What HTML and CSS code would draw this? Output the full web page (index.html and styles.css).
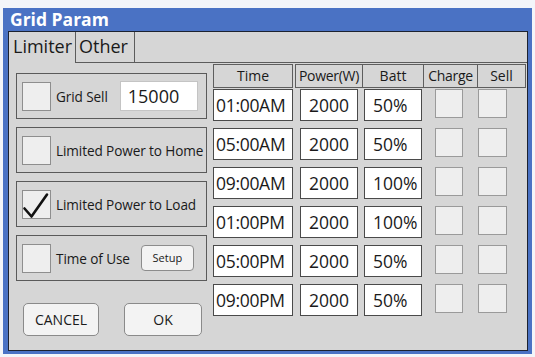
FILE: index.html
```html
<!DOCTYPE html>
<html>
<head>
<meta charset="utf-8">
<link rel="stylesheet" href="styles.css">
</head>
<body>
<div class="window">
  <div class="title">Grid Param</div>
  <div class="panel">
    <div class="tabs">
      <div class="tab active">Limiter</div>
      <div class="tab">Other</div>
      <div class="tab-fill"></div>
    </div>
    <div class="body">
      <div class="left">
        <div class="group">
          <div class="check"></div>
          <span class="label">Grid Sell</span>
          <div class="num-input">15000</div>
        </div>
        <div class="group">
          <div class="check"></div>
          <span class="label">Limited Power to Home</span>
        </div>
        <div class="group">
          <div class="check">
            <svg width="28" height="29" viewBox="0 0 28 29"><path d="M2.5 18.5 L9.5 26.5 L25 4.5" fill="none" stroke="#111" stroke-width="2.6" stroke-linecap="round" stroke-linejoin="round"/></svg>
          </div>
          <span class="label">Limited Power to Load</span>
        </div>
        <div class="group">
          <div class="check"></div>
          <span class="label">Time of Use</span>
          <div class="setup-btn">Setup</div>
        </div>
        <div class="buttons">
          <div class="btn cancel">CANCEL</div>
          <div class="btn ok">OK</div>
        </div>
      </div>
      <div class="right">
        <div class="head">
          <div class="hcell c-time">Time</div>
          <div class="hcell c-power">Power(W)</div>
          <div class="hcell c-batt">Batt</div>
          <div class="hcell c-charge">Charge</div>
          <div class="hcell c-sell">Sell</div>
        </div>
        <div class="row">
          <div class="field f-time">01:00AM</div>
          <div class="field f-power">2000</div>
          <div class="field f-batt">50%</div>
          <div class="cb cb-charge"></div>
          <div class="cb cb-sell"></div>
        </div>
        <div class="row">
          <div class="field f-time">05:00AM</div>
          <div class="field f-power">2000</div>
          <div class="field f-batt">50%</div>
          <div class="cb cb-charge"></div>
          <div class="cb cb-sell"></div>
        </div>
        <div class="row">
          <div class="field f-time">09:00AM</div>
          <div class="field f-power">2000</div>
          <div class="field f-batt">100%</div>
          <div class="cb cb-charge"></div>
          <div class="cb cb-sell"></div>
        </div>
        <div class="row">
          <div class="field f-time">01:00PM</div>
          <div class="field f-power">2000</div>
          <div class="field f-batt">100%</div>
          <div class="cb cb-charge"></div>
          <div class="cb cb-sell"></div>
        </div>
        <div class="row">
          <div class="field f-time">05:00PM</div>
          <div class="field f-power">2000</div>
          <div class="field f-batt">50%</div>
          <div class="cb cb-charge"></div>
          <div class="cb cb-sell"></div>
        </div>
        <div class="row">
          <div class="field f-time">09:00PM</div>
          <div class="field f-power">2000</div>
          <div class="field f-batt">50%</div>
          <div class="cb cb-charge"></div>
          <div class="cb cb-sell"></div>
        </div>
      </div>
    </div>
  </div>
</div>
</body>
</html>
```
FILE: styles.css
```css
* { box-sizing: border-box; }
html, body { margin: 0; padding: 0; }
body {
  width: 535px;
  height: 357px;
  background: #f3f5f9;
  font-family: "Open Sans", "DejaVu Sans", sans-serif;
  color: #1a1a1a;
  overflow: hidden;
}
.window {
  margin: 8px 0 0 3px;
  width: 529px;
  height: 346px;
  background: #4a72c4;
  display: flex;
  flex-direction: column;
}
.title {
  height: 23px;
  padding-left: 7px;
  color: #ffffff;
  font-weight: 700;
  font-size: 17.5px;
  line-height: 23px;
}
.panel {
  flex: 1;
  margin: 0 4px 3px 5px;
  border: 1px solid #1c2230;
  background: #d6d6d6;
  display: flex;
  flex-direction: column;
}
.tabs {
  display: flex;
  height: 31px;
}
.tab {
  font-size: 18px;
  line-height: 29px;
  padding: 0 0 0 4px;
  border-right: 1px solid #5c5c5c;
  border-bottom: 1px solid #5c5c5c;
}
.tab.active {
  width: 67px;
  border-bottom: none;
}
.tab:not(.active) {
  width: 59px;
  padding-left: 3px;
}
.tab-fill {
  flex: 1;
  border-bottom: 1px solid #5c5c5c;
}
.body {
  display: flex;
  padding-left: 7px;
  gap: 6px;
}
.left {
  width: 191px;
  padding-top: 10px;
  display: flex;
  flex-direction: column;
  gap: 8px;
}
.group {
  height: 46px;
  border: 1px solid #5a5a5a;
  display: flex;
  align-items: center;
  padding-left: 5px;
}
.check {
  width: 29px;
  height: 29px;
  background: #eeeeee;
  border: 1px solid #8e8e8e;
  flex: none;
  position: relative;
}
.check svg {
  position: absolute;
  left: -1px;
  top: -1px;
}
.label {
  font-size: 13.6px;
  margin-left: 5px;
  white-space: nowrap;
  letter-spacing: -0.1px;
}
.num-input {
  margin-left: 12px;
  width: 78px;
  height: 30px;
  background: #ffffff;
  border: 1px solid #c4c4c4;
  font-size: 18px;
  line-height: 28px;
  padding-left: 7px;
}
.setup-btn {
  margin-left: 11px;
  width: 53px;
  height: 26px;
  background: #f3f3f3;
  border: 1px solid #8c8c8c;
  border-radius: 4px;
  font-size: 11px;
  line-height: 24px;
  text-align: center;
}
.buttons {
  display: flex;
  margin-top: 14px;
  padding-left: 7px;
  gap: 25px;
}
.btn {
  height: 33px;
  background: #f3f3f3;
  border: 1px solid #8a8a8a;
  border-radius: 5px;
  font-size: 14px;
  line-height: 31px;
  text-align: center;
}
.btn.cancel { width: 76px; }
.btn.ok { width: 78px; }
.right {
  width: 313px;
  padding-top: 1px;
  display: flex;
  flex-direction: column;
  gap: 7px;
}
.head {
  display: flex;
  height: 24px;
  margin-bottom: -6px;
}
.hcell {
  border: 1px solid #5e5e5e;
  border-left: none;
  font-size: 14px;
  line-height: 22px;
  text-align: center;
  white-space: nowrap;
}
.c-time { width: 80px; border-left: 1px solid #5e5e5e; }
.c-power { width: 68px; margin-left: 2px; border-left: 1px solid #5e5e5e; letter-spacing: -0.3px; }
.c-batt { width: 61px; }
.c-charge { width: 54px; letter-spacing: -0.3px; }
.c-sell { width: 48px; }
.row {
  display: flex;
  height: 32px;
  align-items: flex-start;
}
.field {
  height: 32px;
  background: #ffffff;
  border: 1px solid #4a4a4a;
  font-size: 17.5px;
  line-height: 30px;
  white-space: nowrap;
}
.f-time { width: 80px; padding-left: 2px; letter-spacing: -0.3px; }
.f-power { width: 58px; margin-left: 7px; text-align: center; }
.f-batt { width: 58px; margin-left: 6px; padding-left: 8px; }
.cb {
  height: 29px;
  background: #eeeeee;
  border: 1px solid #9a9a9a;
}
.cb-charge { width: 28px; margin-left: 13px; }
.cb-sell { width: 29px; margin-left: 15px; }
```
